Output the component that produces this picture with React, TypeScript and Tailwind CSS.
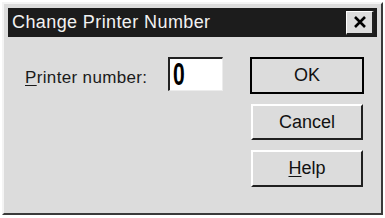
export default function App() {
  return (
    <div className="w-[385px] h-[218px] bg-white p-[2px]" style={{ fontFamily: '"Liberation Sans", Arial, sans-serif' }}>
      <div className="w-[381px] h-[213px] bg-[#dcdcdc] border-t-2 border-l-2 border-t-[#f4f4f4] border-l-[#f4f4f4] border-r-2 border-b-2 border-r-[#3a3a3a] border-b-[#3a3a3a] p-[4px] flex flex-col">
        {/* title bar */}
        <div className="h-[29px] bg-[#1c1c1c] flex items-center justify-between pl-[4px] pr-[3px]">
          <span className="text-[#f2f2f2] text-[18px] tracking-[0.4px]">Change Printer Number</span>
          <div className="w-[28px] h-[24px] bg-[#dcdcdc] border-t border-l border-t-white border-l-white border-r-2 border-b-2 border-r-[#202020] border-b-[#202020] flex items-center justify-center">
            <svg width="14" height="12" viewBox="0 0 14 12">
              <path d="M2 1 L12 11 M12 1 L2 11" stroke="#000" strokeWidth="2.6" />
            </svg>
          </div>
        </div>
        {/* body */}
        <div className="flex flex-1 pt-[20px]">
          <div className="flex items-start flex-1 pl-[17px]">
            <span className="text-[17px] text-[#1a1a1a] tracking-[0.35px] mt-[8px] mr-[21px]">
              <span className="underline underline-offset-2">P</span>rinter number:
            </span>
            <div className="w-[55px] h-[34px] bg-white border-t-2 border-l-2 border-t-[#222] border-l-[#222] border-r border-b border-r-[#ececec] border-b-[#ececec] pl-[3px]">
              <span className="inline-block text-black font-bold text-[31px] leading-[31px] scale-x-[0.68] origin-left">0</span>
            </div>
          </div>
          <div className="flex flex-col gap-[10px] pr-[13px]">
            <button className="w-[114px] h-[37px] bg-[#dcdcdc] border-2 border-black flex items-center justify-center text-[18px] text-[#111]">
              OK
            </button>
            <button className="w-[112px] h-[36px] ml-[1px] bg-[#dcdcdc] border-t-2 border-l-2 border-t-white border-l-white border-r-2 border-b-2 border-r-[#202020] border-b-[#202020] flex items-center justify-center text-[18px] text-[#111]">
              Cancel
            </button>
            <button className="w-[112px] h-[37px] ml-[1px] bg-[#dcdcdc] border-t-2 border-l-2 border-t-white border-l-white border-r-2 border-b-2 border-r-[#202020] border-b-[#202020] flex items-center justify-center text-[18px] text-[#111]">
              <span><span className="underline underline-offset-2">H</span>elp</span>
            </button>
          </div>
        </div>
      </div>
    </div>
  )
}
